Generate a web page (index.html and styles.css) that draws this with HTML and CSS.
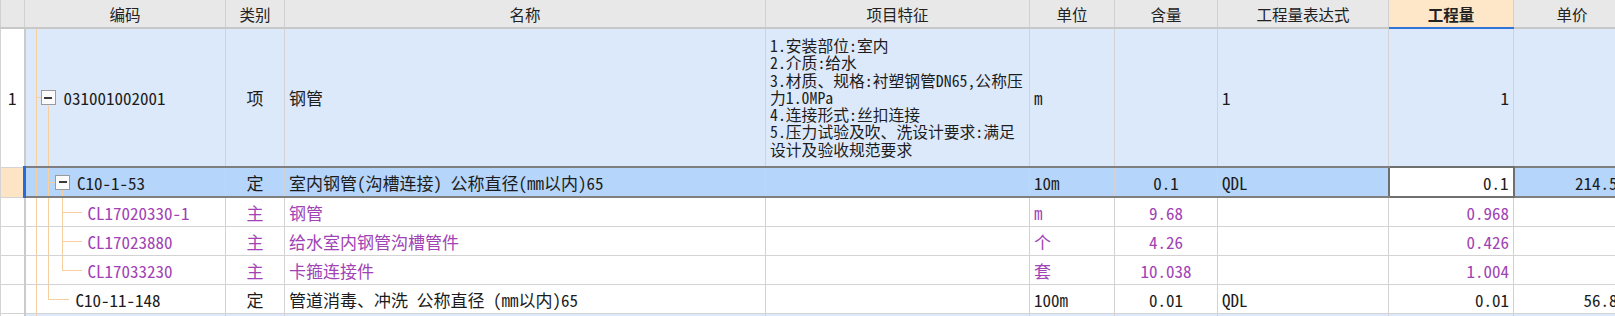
FILE: index.html
```html
<!DOCTYPE html>
<html lang="zh-CN">
<head>
    <meta charset="UTF-8">
    <title>分部分项</title>
    <link rel="stylesheet" href="styles.css">
</head>
<body>
    <div class="sheet">
        <table class="grid">
            <colgroup>
                <col class="w-no">
                <col class="w-code">
                <col class="w-type">
                <col class="w-name">
                <col class="w-feat">
                <col class="w-unit">
                <col class="w-rate">
                <col class="w-expr">
                <col class="w-qty">
                <col class="w-price">
            </colgroup>
            <thead>
                <tr>
                    <th></th>
                    <th>编码</th>
                    <th>类别</th>
                    <th>名称</th>
                    <th>项目特征</th>
                    <th>单位</th>
                    <th>含量</th>
                    <th>工程量表达式</th>
                    <th class="hl">工程量</th>
                    <th>单价</th>
                </tr>
            </thead>
            <tbody>
                <tr class="row-item tall">
                    <td class="no">1</td>
                    <td class="code tree-item"><div class="node lv1"><span class="toggle"></span>031001002001</div></td>
                    <td class="center">项</td>
                    <td>钢管</td>
                    <td class="feat">1.安装部位:室内<br>2.介质:给水<br>3.材质、规格:衬塑钢管DN65,公称压<br>力1.0MPa<br>4.连接形式:丝扣连接<br>5.压力试验及吹、洗设计要求:满足<br>设计及验收规范要求</td>
                    <td>m</td>
                    <td class="center"></td>
                    <td>1</td>
                    <td class="right">1</td>
                    <td class="right"></td>
                </tr>
                <tr class="row-sel">
                    <td class="no">&nbsp;</td>
                    <td class="code tree-quota"><div class="node lv2"><span class="toggle"></span>C10-1-53</div></td>
                    <td class="center">定</td>
                    <td>室内钢管(沟槽连接) 公称直径(mm以内)65</td>
                    <td></td>
                    <td>10m</td>
                    <td class="center">0.1</td>
                    <td>QDL</td>
                    <td class="right editing">0.1</td>
                    <td class="right">214.53</td>
                </tr>
                <tr class="row-main">
                    <td class="no"></td>
                    <td class="code tree-child"><div class="node lv3">CL17020330-1</div></td>
                    <td class="center">主</td>
                    <td>钢管</td>
                    <td></td>
                    <td>m</td>
                    <td class="center">9.68</td>
                    <td></td>
                    <td class="right">0.968</td>
                    <td class="right"></td>
                </tr>
                <tr class="row-main">
                    <td class="no"></td>
                    <td class="code tree-child"><div class="node lv3">CL17023880</div></td>
                    <td class="center">主</td>
                    <td>给水室内钢管沟槽管件</td>
                    <td></td>
                    <td>个</td>
                    <td class="center">4.26</td>
                    <td></td>
                    <td class="right">0.426</td>
                    <td class="right"></td>
                </tr>
                <tr class="row-main">
                    <td class="no"></td>
                    <td class="code tree-lastchild"><div class="node lv3">CL17033230</div></td>
                    <td class="center">主</td>
                    <td>卡箍连接件</td>
                    <td></td>
                    <td>套</td>
                    <td class="center">10.038</td>
                    <td></td>
                    <td class="right">1.004</td>
                    <td class="right"></td>
                </tr>
                <tr class="row-quota">
                    <td class="no"></td>
                    <td class="code tree-lastquota"><div class="node lv2-leaf">C10-11-148</div></td>
                    <td class="center">定</td>
                    <td>管道消毒、冲洗 公称直径 (mm以内)65</td>
                    <td></td>
                    <td>100m</td>
                    <td class="center">0.01</td>
                    <td>QDL</td>
                    <td class="right">0.01</td>
                    <td class="right">56.81</td>
                </tr>
                <tr class="row-item row-next">
                    <td class="no">2</td>
                    <td class="code tree-root"></td>
                    <td></td>
                    <td></td>
                    <td class="feat">1.安装部位:室内<br>2.介质:给水<br>3.材质、规格:衬塑钢管DN50<br>4.连接形式:丝扣连接</td>
                    <td></td>
                    <td></td>
                    <td></td>
                    <td></td>
                    <td></td>
                </tr>
            </tbody>
        </table>
    </div>
</body>
</html>
```

FILE: styles.css
```css
body {
    margin: 0;
    background-color: #fff;
    font-family: "Noto Sans Mono CJK SC", "Noto Sans CJK SC", "DejaVu Sans Mono", monospace;
    font-weight: 300;
    color: #1c1c1c;
}
.sheet {
    height: 316px;
    overflow: hidden;
}
.grid {
    --tl: #f6cf9f;
    width: 1630px;
    table-layout: fixed;
    border-collapse: collapse;
    font-size: 17px;
}
.w-no { width: 24px; }
.w-code { width: 201px; }
.w-type { width: 59px; }
.w-name { width: 481px; }
.w-feat { width: 264px; }
.w-unit { width: 85px; }
.w-rate { width: 103px; }
.w-expr { width: 171px; }
.w-qty { width: 125px; }
.w-price { width: 117px; }

th {
    height: 27px;
    padding: 0 4px;
    background-color: #e8e8e8;
    border: 1px solid #d0d0d0;
    border-top: none;
    border-bottom: 2px solid #c8c8c8;
    font-size: 15.5px;
    font-weight: 400;
    color: #222;
    text-align: center;
}
th.hl {
    background-color: #fee6c9;
    border-bottom: 2px solid #2f74d6;
    font-weight: 700;
}
td {
    height: 28px;
    padding: 0 4px;
    border: 1px solid #d3d3d3;
    white-space: nowrap;
    overflow: hidden;
    vertical-align: middle;
}
td.no {
    padding: 0;
    text-align: center;
    background-color: #fff;
    border-right: 2px solid #cbcbcb;
}
td.center { text-align: center; }
td.right { text-align: right; }

.tall td { height: 137px; }
.row-item td { background-color: #dce9fb; }
.row-item td.no { background-color: #fff; }

.feat {
    font-size: 15.8px;
    line-height: 17.3px;
}

/* current row */
.row-sel td {
    background-color: #b5d5fa;
    border-top: 2px solid #7f7f7f;
    border-bottom: 2px solid #7f7f7f;
}
.row-sel td.no {
    background-color: #fde4c5;
    border-top: 1px solid #d3d3d3;
    border-bottom: 1px solid #d3d3d3;
    border-right: 3px solid #2a6ad4;
}
.row-sel td.editing {
    background-color: #fff;
    border: 2px solid #6f6f6f;
}

.row-main td { color: #a142b5; }

.row-next td { height: 150px; vertical-align: top; }
.row-next td.no { vertical-align: middle; }
.row-next td.feat { padding-top: 3px; }

/* tree guides in the code column */
.code {
    padding: 0;
    background-repeat: no-repeat;
}
.tree-root {
    background-image: linear-gradient(var(--tl), var(--tl));
    background-position: 10px 0;
    background-size: 1px 100%;
}
.tree-item {
    background-image: linear-gradient(var(--tl), var(--tl)), linear-gradient(var(--tl), var(--tl)), linear-gradient(var(--tl), var(--tl));
    background-position: 10px 0, 22px 100%, 10px 50%;
    background-size: 1px 100%, 1px calc(50% - 8px), 5px 1px;
}
.tree-quota {
    background-image: linear-gradient(var(--tl), var(--tl)), linear-gradient(var(--tl), var(--tl)), linear-gradient(var(--tl), var(--tl)), linear-gradient(var(--tl), var(--tl));
    background-position: 10px 0, 22px 0, 36px 100%, 22px 50%;
    background-size: 1px 100%, 1px 100%, 1px calc(50% - 7px), 7px 1px;
}
.tree-child {
    background-image: linear-gradient(var(--tl), var(--tl)), linear-gradient(var(--tl), var(--tl)), linear-gradient(var(--tl), var(--tl)), linear-gradient(var(--tl), var(--tl));
    background-position: 10px 0, 22px 0, 36px 0, 36px 50%;
    background-size: 1px 100%, 1px 100%, 1px 100%, 20px 1px;
}
.tree-lastchild {
    background-image: linear-gradient(var(--tl), var(--tl)), linear-gradient(var(--tl), var(--tl)), linear-gradient(var(--tl), var(--tl)), linear-gradient(var(--tl), var(--tl));
    background-position: 10px 0, 22px 0, 36px 0, 36px 50%;
    background-size: 1px 100%, 1px 100%, 1px 50%, 20px 1px;
}
.tree-lastquota {
    background-image: linear-gradient(var(--tl), var(--tl)), linear-gradient(var(--tl), var(--tl)), linear-gradient(var(--tl), var(--tl));
    background-position: 10px 0, 22px 0, 22px 50%;
    background-size: 1px 100%, 1px 50%, 21px 1px;
}

.node {
    display: flex;
    align-items: center;
}
.lv1 { padding-left: 15px; }
.lv2 { padding-left: 29px; }
.lv2-leaf { padding-left: 50px; }
.lv3 { padding-left: 62px; }

.toggle {
    display: inline-flex;
    align-items: center;
    justify-content: center;
    box-sizing: border-box;
    width: 15px;
    height: 15px;
    margin-right: 8px;
    border: 1px solid #9a9a9a;
    background-color: #fbfbfb;
}
.toggle::before {
    content: "";
    width: 8px;
    height: 2px;
    background-color: #3a3a3a;
}
.lv2 .toggle { margin-right: 7px; }
```
